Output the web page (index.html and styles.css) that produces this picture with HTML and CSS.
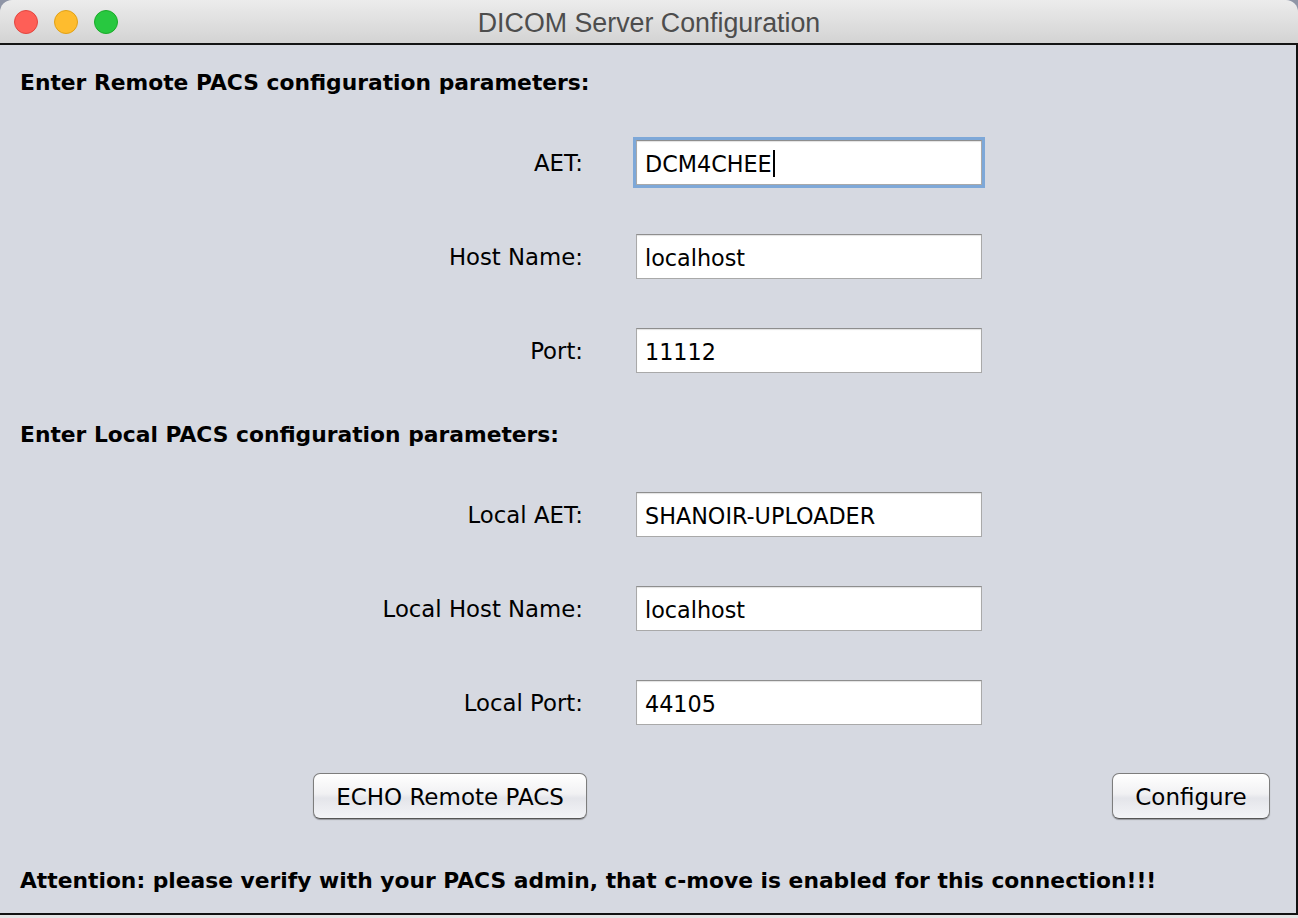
FILE: index.html
```html
<!DOCTYPE html>
<html>
<head>
<meta charset="utf-8">
<link rel="stylesheet" href="styles.css">
</head>
<body>
<div class="window">
  <div class="titlebar">
    <div class="lights">
      <span class="light red"></span>
      <span class="light yellow"></span>
      <span class="light green"></span>
    </div>
    <div class="title">DICOM Server Configuration</div>
  </div>
  <div class="content">
    <div class="heading first">Enter Remote PACS configuration parameters:</div>
    <div class="form">
      <label class="label">AET:</label>
      <div class="field focused"><span class="value">DCM4CHEE</span><span class="caret"></span></div>
      <label class="label">Host Name:</label>
      <div class="field"><span class="value">localhost</span></div>
      <label class="label">Port:</label>
      <div class="field"><span class="value">11112</span></div>
    </div>
    <div class="heading">Enter Local PACS configuration parameters:</div>
    <div class="form">
      <label class="label">Local AET:</label>
      <div class="field"><span class="value">SHANOIR-UPLOADER</span></div>
      <label class="label">Local Host Name:</label>
      <div class="field"><span class="value">localhost</span></div>
      <label class="label">Local Port:</label>
      <div class="field"><span class="value">44105</span></div>
    </div>
    <div class="buttons">
      <button class="btn echo">ECHO Remote PACS</button>
      <button class="btn configure">Configure</button>
    </div>
    <div class="heading attention">Attention: please verify with your PACS admin, that c-move is enabled for this connection!!!</div>
  </div>
</div>
</body>
</html>
```
FILE: styles.css
```css
* { box-sizing: border-box; }
html, body {
  margin: 0;
  padding: 0;
  width: 1298px;
  height: 918px;
  overflow: hidden;
  background: #e4e4e4;
}
.window {
  width: 1298px;
  height: 915px;
  display: flex;
  flex-direction: column;
  background: #8f95a6;
  border-bottom: 2px solid #111;
}
.titlebar {
  height: 45px;
  flex: none;
  position: relative;
  background: linear-gradient(#ececec, #d3d3d3);
  border-bottom: 2px solid #141414;
  border-top-right-radius: 12px;
  border-top-left-radius: 12px;
  display: flex;
  align-items: center;
  justify-content: center;
}
.lights {
  position: absolute;
  left: 14px;
  top: 10px;
  display: flex;
  gap: 16px;
}
.light {
  width: 24px;
  height: 24px;
  border-radius: 50%;
  display: block;
}
.red { background: #fe5f57; border: 1px solid #e2463f; }
.yellow { background: #febc2e; border: 1px solid #e1a116; }
.green { background: #28c840; border: 1px solid #1aab29; }
.title {
  font-family: "Liberation Sans", Arial, sans-serif;
  font-size: 26.8px;
  color: #4d4d4d;
  margin-top: 3px;
}
.content {
  flex: 1;
  background: #d6d9e1;
  border-right: 2px solid #111;
  padding: 0 0 0 20px;
  display: flex;
  flex-direction: column;
  font-family: "DejaVu Sans", sans-serif;
  color: #000;
}
.heading {
  font-weight: bold;
  font-size: 21.8px;
  height: 26px;
  line-height: 28px;
  margin-top: 48px;
  white-space: nowrap;
}
.heading.first { margin-top: 24px; }
.form {
  display: grid;
  grid-template-columns: 563px 346px;
  column-gap: 53px;
  row-gap: 49px;
  margin-top: 45px;
}
.label {
  text-align: right;
  font-size: 22.8px;
  line-height: 47px;
  height: 45px;
  white-space: nowrap;
}
.field {
  height: 45px;
  background: #fff;
  border: 1px solid #a9a9a9;
  border-top-color: #8e8e8e;
  box-shadow: inset 0 1px 1px rgba(0,0,0,0.12);
  display: flex;
  align-items: center;
  padding-left: 8px;
  padding-top: 2px;
  font-size: 22.3px;
}
.field.focused {
  box-shadow: 0 0 0 3px #7ea8d8, inset 0 1px 1px rgba(0,0,0,0.12);
}
.caret {
  display: inline-block;
  width: 2px;
  height: 27px;
  background: #000;
  margin-left: 1px;
}
.buttons {
  display: flex;
  margin-top: 48px;
  padding-left: 293px;
  padding-right: 26px;
}
.btn {
  height: 46px;
  border-radius: 7px;
  border: 1px solid #7d7d7d;
  border-bottom-color: #555;
  background: linear-gradient(#ffffff, #f1f1f3 45%, #e4e5ea 55%, #f3f4f7);
  box-shadow: 0 1px 1px rgba(0,0,0,0.3);
  font-family: "DejaVu Sans", sans-serif;
  font-size: 23px;
  color: #000;
  padding: 2px 0 0 0;
}
.echo { width: 274px; }
.configure { width: 158px; margin-left: auto; }
.attention { margin-top: 48px; }
```
